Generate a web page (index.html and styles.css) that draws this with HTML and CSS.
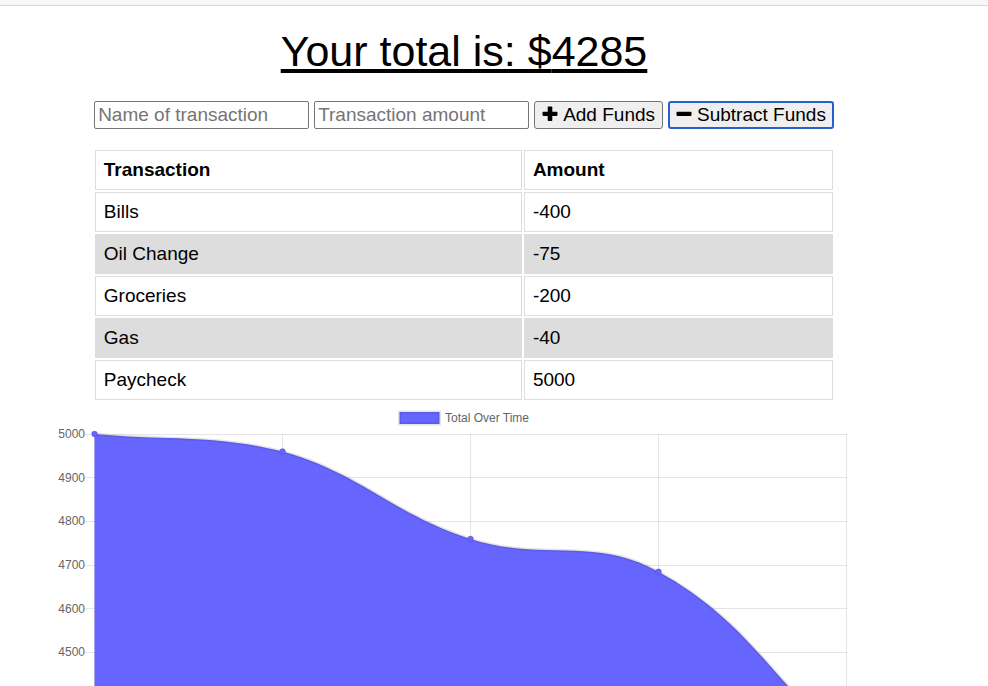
FILE: index.html
```html
<!DOCTYPE html>
<html lang="en">
<head>
<meta charset="utf-8">
<meta name="viewport" content="width=device-width, initial-scale=1">
<title>Budget Tracker</title>
<link rel="stylesheet" href="styles.css">
</head>
<body>
<div class="topbar"></div>
<main class="wrapper">
  <h1 class="total">Your total is: $<span id="total">4285</span></h1>

  <form class="form">
    <input type="text" class="field" id="t-name" aria-label="Name of transaction" placeholder="Name of transaction">
    <input type="text" class="field" id="t-amount" aria-label="Transaction amount" placeholder="Transaction amount">
    <button type="button" class="btn">
      <svg class="icon" viewBox="0 0 16 16" aria-hidden="true"><path d="M6.500 .5h3q.8 0 .8.8v4.400h4.400q.8 0 .8.8v2.600q0 .8-.8.8h-4.400v4.400q0 .8-.8.8h-3q-.8 0-.8-.8v-4.400h-4.400q-.8 0-.8-.8v-2.600q0-.8.8-.8h4.400v-4.400q0-.8.8-.8z"/></svg>
      Add Funds
    </button>
    <button type="button" class="btn btn-active">
      <svg class="icon" viewBox="0 0 16 16" aria-hidden="true"><path d="M1.300 5.700h13.400q.8 0 .8.8v2.600q0 .8-.8.8h-13.400q-.8 0-.8-.8v-2.600q0-.8.8-.8z"/></svg>
      Subtract Funds
    </button>
  </form>

  <table class="transactions">
    <thead>
      <tr><th class="col-name">Transaction</th><th>Amount</th></tr>
    </thead>
    <tbody>
      <tr><td>Bills</td><td>-400</td></tr>
      <tr><td>Oil Change</td><td>-75</td></tr>
      <tr><td>Groceries</td><td>-200</td></tr>
      <tr><td>Gas</td><td>-40</td></tr>
      <tr><td>Paycheck</td><td>5000</td></tr>
    </tbody>
  </table>

  <svg class="chart" viewBox="0 0 820 284" role="img" aria-label="Total Over Time">
    <g class="legend">
      <rect class="swatch" x="345.500" y="10" width="40" height="12"/>
      <text x="391" y="20">Total Over Time</text>
    </g>
    <path class="grid" d="M31 32.500H793M31 75.500H793M31 119.500H793M31 163.500H793M31 206.500H793M31 250.500H793M40.500 32V284M228.500 32V284M416.500 32V284M604.500 32V284M792.500 32V284"/>
    <g class="ticks">
      <text x="31" y="36">5000</text>
      <text x="31" y="80">4900</text>
      <text x="31" y="123">4800</text>
      <text x="31" y="167">4700</text>
      <text x="31" y="211">4600</text>
      <text x="31" y="254">4500</text>
    </g>
    <path class="area" d="M40.500 32C115.700 39 156.800 32 228.500 49.500C307.200 71.400 338.200 111.900 416.500 136.900C488.600 159.900 540.400 134.100 604.500 169.700C690.800 217.100 717.300 275 792.500 345H40.500Z"/>
    <path class="line" d="M40.500 32C115.700 39 156.800 32 228.500 49.500C307.200 71.400 338.200 111.900 416.500 136.900C488.600 159.900 540.400 134.100 604.500 169.700C690.800 217.100 717.300 275 792.500 345"/>
    <g class="points">
      <circle cx="40.500" cy="32" r="3"/>
      <circle cx="228.500" cy="49.500" r="3"/>
      <circle cx="416.500" cy="136.900" r="3"/>
      <circle cx="604.500" cy="169.700" r="3"/>
    </g>
  </svg>
</main>
</body>
</html>
```

FILE: styles.css
```css
* {
  box-sizing: border-box;
}

body {
  margin: 0;
  background: #fff;
  color: #000;
  font-family: "Liberation Sans", Arial, sans-serif;
  font-size: 19px;
  line-height: 22px;
}

.topbar {
  height: 6px;
  background: #f6f7f9;
  border-bottom: 1px solid #d3d5df;
}

.wrapper {
  display: flex;
  flex-direction: column;
  align-items: center;
  margin-right: 60px;
}

.total {
  margin: 20px 0 25px;
  font-size: 43px;
  font-weight: 400;
  line-height: 50px;
  text-decoration: underline;
  text-decoration-thickness: 4px;
  text-underline-offset: 3px;
}

.form {
  display: flex;
  justify-content: center;
  gap: 5px;
  margin-bottom: 19px;
}

.field {
  width: 215px;
  height: 28px;
  padding: 1px 3px;
  border: 1px solid #767676;
  border-radius: 2px;
  font: inherit;
}

.field::placeholder {
  color: #757575;
  opacity: 1;
}

.btn {
  display: flex;
  align-items: center;
  gap: 5px;
  height: 28px;
  padding: 0 7px;
  border: 1px solid #767676;
  border-radius: 3px;
  background: #efefef;
  color: #000;
  font: inherit;
  white-space: nowrap;
}

.btn-active {
  padding: 0 6px;
  border: 2px solid #2660cc;
}

.icon {
  width: 16px;
  height: 16px;
  margin-bottom: 2px;
}

.transactions {
  width: 80%;
  border-spacing: 2px;
  table-layout: fixed;
}

.transactions th,
.transactions td {
  padding: 8px;
  border: 1px solid #ddd;
  text-align: left;
}

.transactions .col-name {
  width: 58%;
}

.transactions tbody tr:nth-child(even) {
  background: #ddd;
}

.chart {
  display: block;
  width: 100%;
  max-width: 820px;
  overflow: hidden;
}

.chart text {
  fill: #666;
  font-size: 12px;
}

.ticks text {
  text-anchor: end;
}

.swatch {
  fill: #66f;
  stroke: rgba(0, 0, 0, 0.1);
  stroke-width: 3px;
}

.grid {
  fill: none;
  stroke: rgba(0, 0, 0, 0.1);
}

.area {
  fill: #66f;
}

.line {
  fill: none;
  stroke: rgba(0, 0, 0, 0.1);
  stroke-width: 3px;
}

.points circle {
  fill: #66f;
  stroke: rgba(0, 0, 0, 0.1);
}
```
